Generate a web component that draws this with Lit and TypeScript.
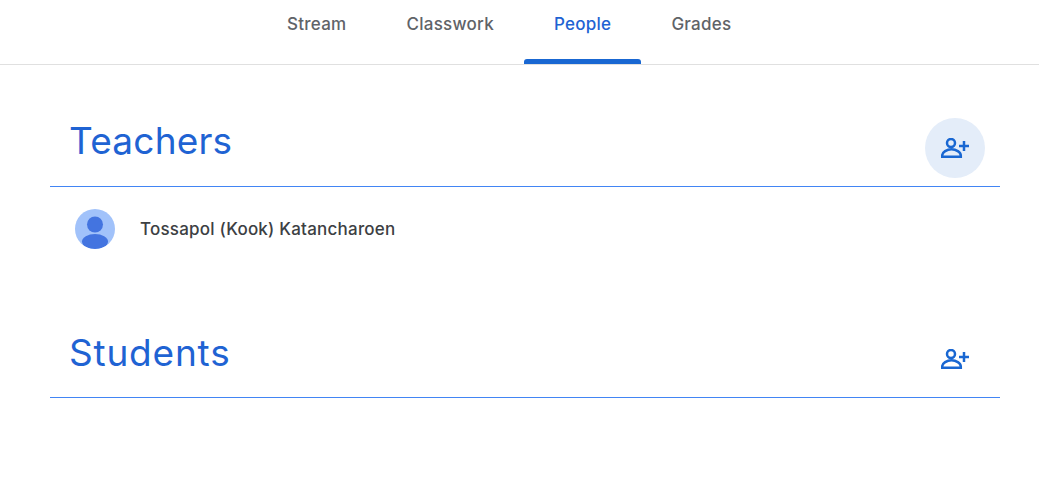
import { LitElement, html, css, svg } from "lit";
import { customElement } from "lit/decorators.js";

const addIcon = svg`<svg class="add-icon" width="28" height="20" viewBox="0 0 28 20" fill="none" stroke="#1967d2" stroke-width="2.5">
  <circle cx="10" cy="5" r="4"></circle>
  <path d="M1.2 18.8v-1.3C1.2 14 6 11.3 10.5 11.3S19.8 14 19.8 17.5v1.3Z"></path>
  <path d="M23 3v10M18 8h10"></path>
</svg>`;

@customElement("app-root")
export class AppRoot extends LitElement {
  static styles = css`
    :host {
      display: block;
      font-family: Inter, "Liberation Sans", sans-serif;
      background: #fff;
      min-height: 493px;
    }

    nav {
      display: flex;
      height: 64px;
      padding-left: 257px;
      border-bottom: 1px solid #e0e0e0;
    }

    .tab {
      display: flex;
      padding: 14px 30px 0;
      font-size: 17px;
      font-weight: 450;
      letter-spacing: 0.26px;
      line-height: 20px;
      color: #5f6368;
      position: relative;
    }

    .tab.active {
      color: #1f63d3;
    }

    .tab.active::after {
      content: "";
      position: absolute;
      left: 0;
      right: 0;
      bottom: 0;
      height: 5px;
      background: #1967d2;
      border-radius: 3px 3px 0 0;
    }

    main {
      padding: 53px 39px 0 50px;
    }

    .section-head {
      display: flex;
      justify-content: space-between;
      padding: 0 15px 8px 19px;
      border-bottom: 1px solid #4285f4;
    }

    h2 {
      margin: 0;
      font-size: 37px;
      font-weight: 400;
      letter-spacing: 0.2px;
      line-height: 46px;
      color: #1f63d3;
    }

    h2.students {
      padding-top: 1px;
      letter-spacing: 0.8px;
    }

    .add {
      display: flex;
      align-items: center;
      justify-content: center;
      width: 60px;
      height: 60px;
      border-radius: 50%;
    }

    .add.hover {
      background: #e4edf9;
    }

    .person {
      display: flex;
      align-items: center;
      gap: 25px;
      padding: 22px 25px 80px;
      font-size: 17px;
      font-weight: 450;
      letter-spacing: 0.22px;
      color: #3c4043;
    }

    .avatar {
      display: block;
    }
  `;

  render() {
    return html`
      <nav>
        <div class="tab">Stream</div>
        <div class="tab">Classwork</div>
        <div class="tab active">People</div>
        <div class="tab">Grades</div>
      </nav>
      <main>
        <section>
          <div class="section-head">
            <h2>Teachers</h2>
            <div class="add hover">${addIcon}</div>
          </div>
          <div class="person">
            <svg class="avatar" width="40" height="40" viewBox="0 0 40 40">
              <defs>
                <clipPath id="c"><circle cx="20" cy="20" r="20"></circle></clipPath>
              </defs>
              <circle cx="20" cy="20" r="20" fill="#a1c2fa"></circle>
              <g clip-path="url(#c)" fill="#4374e0">
                <circle cx="20" cy="15.5" r="8"></circle>
                <ellipse cx="20" cy="32.5" rx="13" ry="7.5"></ellipse>
              </g>
            </svg>
            <span>Tossapol (Kook) Katancharoen</span>
          </div>
        </section>
        <section>
          <div class="section-head">
            <h2 class="students">Students</h2>
            <div class="add">${addIcon}</div>
          </div>
        </section>
      </main>
    `;
  }
}
